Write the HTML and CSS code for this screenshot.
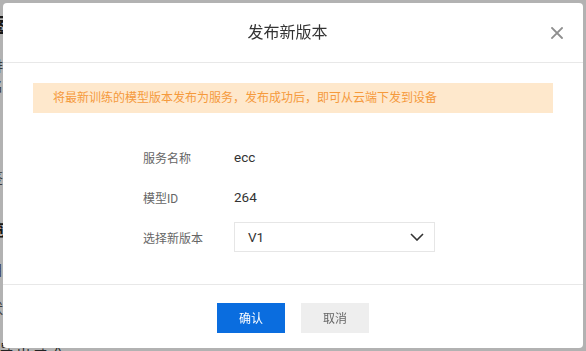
FILE: index.html
```html
<!DOCTYPE html>
<html lang="zh-CN">
<head>
<meta charset="utf-8">
<title>发布新版本</title>
<link rel="stylesheet" href="styles.css">
</head>
<body>
<div class="page">
  <div class="pg-title">图</div>
  <div class="pg-line">排</div>
  <div class="pg-line">名</div>
  <div class="pg-line pg-gap">签</div>
  <div class="pg-bold">览</div>
  <div class="pg-line">目</div>
  <div class="pg-line">状</div>
  <div class="pg-bottom">导出导入</div>
</div>

<div class="overlay">
  <div class="modal">
    <div class="modal-header">
      <span class="modal-title">发布新版本</span>
      <button class="modal-close" aria-label="关闭">
        <svg width="12" height="12" viewBox="0 0 12 12"><path d="M1 1L11 11M11 1L1 11" stroke="#8f8f8f" stroke-width="1.8" stroke-linecap="square"/></svg>
      </button>
    </div>
    <div class="modal-body">
      <div class="alert">将最新训练的模型版本发布为服务，发布成功后，即可从云端下发到设备</div>
      <div class="form">
        <div class="form-row">
          <span class="form-label">服务名称</span>
          <span class="form-value">ecc</span>
        </div>
        <div class="form-row">
          <span class="form-label">模型ID</span>
          <span class="form-value">264</span>
        </div>
        <div class="form-row">
          <span class="form-label">选择新版本</span>
          <div class="select">
            <span class="select-value">V1</span>
            <svg class="chevron" width="14" height="8" viewBox="0 0 14 8"><path d="M1 1L7 7L13 1" fill="none" stroke="#333" stroke-width="1.6"/></svg>
          </div>
        </div>
      </div>
    </div>
    <div class="modal-footer">
      <button class="btn btn-primary">确认</button>
      <button class="btn btn-default">取消</button>
    </div>
  </div>
</div>
</body>
</html>
```
FILE: styles.css
```css
* { box-sizing: border-box; }
html, body { margin: 0; padding: 0; }
body {
  width: 586px;
  height: 351px;
  overflow: hidden;
  background: #ffffff;
  font-family: Roboto, "Noto Sans CJK SC", sans-serif;
}
.page {
  display: flex;
  flex-direction: column;
  margin-left: -11px;
  padding-top: 14px;
  color: #333;
}
.pg-title { font-size: 20px; line-height: 24px; font-weight: 600; color: #222; }
.pg-line { font-size: 14px; line-height: 20px; color: #555; margin-top: 18px; }
.pg-line:nth-child(3) { margin-top: 0; }
.pg-gap { margin-top: 72px; }
.pg-bold { font-size: 16px; line-height: 22px; font-weight: 700; color: #222; margin-top: 32px; }
.pg-bottom { font-size: 13px; line-height: 18px; color: #333; margin-top: 22px; margin-left: 11px; letter-spacing: 4px; }

.overlay {
  position: fixed;
  inset: 0;
  background: rgba(0, 0, 0, 0.3);
  display: flex;
  justify-content: center;
  align-items: flex-start;
  padding-top: 3px;
}
.modal {
  width: 580px;
  height: 345px;
  background: #fff;
  border-radius: 4px;
  display: flex;
  flex-direction: column;
}
.modal-header {
  position: relative;
  height: 60px;
  border-bottom: 1px solid #e8e8e8;
  display: flex;
  align-items: center;
  justify-content: center;
  padding-right: 11px;
}
.modal-title {
  font-size: 16px;
  color: #333;
  line-height: 20px;
}
.modal-close {
  position: absolute;
  right: 20px;
  top: 24px;
  width: 12px;
  height: 12px;
  padding: 0;
  border: 0;
  background: none;
  display: flex;
}
.modal-body {
  padding: 20px 30px 32px;
  border-bottom: 1px solid #e8e8e8;
}
.alert {
  height: 30px;
  background: #fee8cc;
  color: #f59a3c;
  font-size: 12px;
  line-height: 30px;
  padding-left: 20px;
}
.form {
  margin-top: 29px;
  padding-left: 110px;
  display: flex;
  flex-direction: column;
  gap: 10px;
}
.form-row {
  height: 30px;
  display: flex;
  align-items: center;
}
.form-label {
  width: 91px;
  font-size: 12px;
  color: #666;
}
.form-value {
  font-size: 13.5px;
  color: #333;
}
.select {
  width: 201px;
  height: 30px;
  border: 1px solid #e6e6e6;
  display: flex;
  align-items: center;
  justify-content: space-between;
  padding: 0 10px 0 13px;
}
.select-value {
  font-size: 13.5px;
  color: #333;
}
.chevron { display: block; }
.modal-footer {
  flex: 1;
  display: flex;
  justify-content: center;
  align-items: center;
  gap: 16px;
  padding-top: 2px;
}
.btn {
  width: 68px;
  height: 30px;
  border: 0;
  border-radius: 0;
  font-family: Roboto, "Noto Sans CJK SC", sans-serif;
  font-size: 12px;
  padding: 0;
}
.btn-primary { background: #0a6ddf; color: #fff; }
.btn-default { background: #eeeeee; color: #666; }
```
